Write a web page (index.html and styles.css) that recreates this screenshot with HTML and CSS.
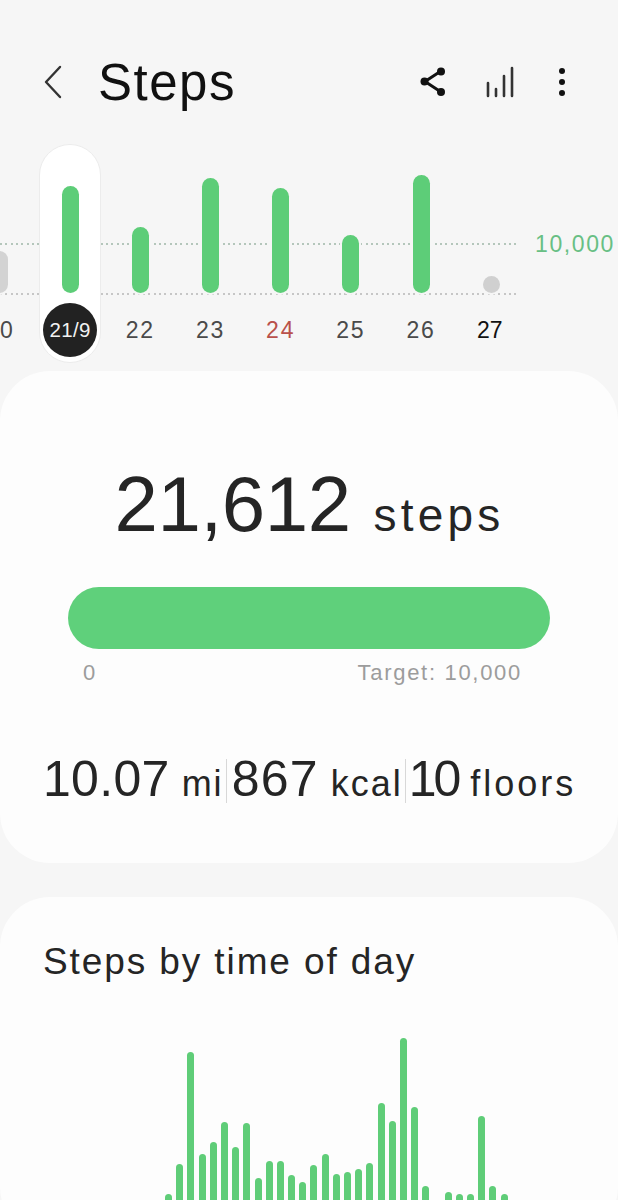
FILE: index.html
```html
<!DOCTYPE html>
<html lang="en">
<head>
<meta charset="utf-8">
<title>Steps</title>
<link rel="stylesheet" href="styles.css">
</head>
<body>
<div class="page">
  <header class="header">
    <svg class="back" width="22" height="34" viewBox="0 0 22 34"><path d="M19 2 L5 17 L19 32" fill="none" stroke="#333" stroke-width="2.4" stroke-linecap="round" stroke-linejoin="round"/></svg>
    <h1 class="title">Steps</h1>
    <div class="actions">
      <svg class="icon-share" width="30" height="32" viewBox="0 0 30 32"><path d="M22 5 L6 15.5 L22 26" fill="none" stroke="#111" stroke-width="3"/><circle cx="22" cy="5.500" r="4" fill="#111"/><circle cx="5.500" cy="15.500" r="4" fill="#111"/><circle cx="22" cy="26" r="4" fill="#111"/></svg>
      <svg class="icon-stats" width="30" height="32" viewBox="0 0 30 32"><path d="M2 30V17M10 30V23M18 30V10M26 30V2" fill="none" stroke="#333" stroke-width="2.600" stroke-linecap="round"/></svg>
      <svg class="icon-more" width="8" height="30" viewBox="0 0 8 30"><circle cx="4" cy="4" r="3" fill="#111"/><circle cx="4" cy="15" r="3" fill="#111"/><circle cx="4" cy="26" r="3" fill="#111"/></svg>
    </div>
  </header>

  <section class="trend">
    <div class="dots dots-target"></div>
    <div class="dots dots-base"></div>
    <span class="target-label">10,000</span>
    <div class="days">
      <div class="day"><div class="plot"><div class="bar bar-empty" style="height:42px"></div></div><div class="label">20</div></div>
      <div class="day day-selected"><div class="plot"><div class="bar" style="height:107px"></div></div><div class="label label-selected">21/9</div></div>
      <div class="day"><div class="plot"><div class="bar" style="height:66px"></div></div><div class="label">22</div></div>
      <div class="day"><div class="plot"><div class="bar" style="height:115px"></div></div><div class="label">23</div></div>
      <div class="day"><div class="plot"><div class="bar" style="height:105px"></div></div><div class="label label-sunday">24</div></div>
      <div class="day"><div class="plot"><div class="bar" style="height:58px"></div></div><div class="label">25</div></div>
      <div class="day"><div class="plot"><div class="bar" style="height:118px"></div></div><div class="label">26</div></div>
      <div class="day"><div class="plot"><div class="bar bar-dot" style="height:17px"></div></div><div class="label label-today">27</div></div>
    </div>
  </section>

  <section class="card card-summary">
    <div class="total"><span class="total-num">21,612</span><span class="total-unit">steps</span></div>
    <div class="progress"></div>
    <div class="progress-scale"><span>0</span><span>Target: 10,000</span></div>
    <div class="stats">
      <div class="stat"><span class="stat-num">10.07</span><span class="stat-unit">mi</span></div>
      <div class="stat stat-split"><span class="stat-num stat-num-wide">867</span><span class="stat-unit">kcal</span></div>
      <div class="stat stat-split stat-last"><span class="stat-num stat-num-tight">10</span><span class="stat-unit stat-unit-wide">floors</span></div>
    </div>
  </section>

  <section class="card card-time">
    <h2 class="card-title">Steps by time of day</h2>
    <div class="hours">
      <i style="height:26px"></i><i style="height:56px"></i><i style="height:168px"></i><i style="height:66px"></i><i style="height:78px"></i><i style="height:98px"></i><i style="height:73px"></i><i style="height:97px"></i><i style="height:42px"></i><i style="height:59px"></i><i style="height:59px"></i><i style="height:45px"></i><i style="height:38px"></i><i style="height:55px"></i><i style="height:66px"></i><i style="height:46px"></i><i style="height:48px"></i><i style="height:51px"></i><i style="height:57px"></i><i style="height:117px"></i><i style="height:99px"></i><i style="height:182px"></i><i style="height:113px"></i><i style="height:34px"></i><i style="height:0"></i><i style="height:28px"></i><i style="height:26px"></i><i style="height:26px"></i><i style="height:104px"></i><i style="height:34px"></i><i style="height:26px"></i>
    </div>
  </section>
</div>
</body>
</html>
```

FILE: styles.css
```css
* { box-sizing: border-box; }
html, body { margin: 0; padding: 0; }
body { background: #f6f6f6; font-family: "Liberation Sans", Arial, sans-serif; color: #252525; }
.page { width: 618px; height: 1200px; overflow: hidden; }

.header { display: flex; align-items: center; height: 144px; padding: 20px 0 0 41px; }
.back { flex: none; }
.title { margin: 0 0 0 35px; font-size: 51px; font-weight: 400; letter-spacing: 1.500px; color: #111; }
.actions { display: flex; align-items: center; margin-left: auto; padding-right: 52px; gap: 25px; }
.icon-share { margin-right: 12px; }
.icon-stats { margin-right: 17px; }

.trend { position: relative; height: 227px; overflow: hidden; }
.dots { position: absolute; left: 0; width: 517px; height: 1.500px; background: repeating-linear-gradient(90deg, #b4c6bb 0 2px, transparent 2px 5.300px); }
.dots-target { top: 99px; }
.dots-base { top: 149px; background: repeating-linear-gradient(90deg, #c6c6c6 0 2px, transparent 2px 5.300px); }
.target-label { position: absolute; left: 535px; top: 87px; font-size: 23px; line-height: 26px; letter-spacing: 1.600px; color: #68bf84; }

.days { position: relative; display: flex; margin-left: -35.200px; }
.day { display: flex; flex-direction: column; align-items: center; flex: none; width: 70.200px; height: 219px; }
.day-selected { width: 62px; margin: 0 4.100px; background: #fff; border: 1px solid #ececec; border-radius: 31px; margin-top: 0; }
.plot { display: flex; align-items: flex-end; height: 149px; flex: none; }
.day-selected .plot { height: 148px; }
.bar { width: 17px; border-radius: 9px; background: #5dcd78; box-shadow: 0 0 0 2px #f6f6f6; }
.day-selected .bar { box-shadow: none; }
.bar-empty { background: #d3d3d3; }
.bar-dot { background: #d0d0d0; }
.label { display: flex; align-items: center; justify-content: center; height: 54px; margin-top: 10px; font-size: 23px; letter-spacing: 1.800px; color: #4a4a4a; }
.label-selected { width: 54px; border-radius: 50%; background: #222; color: #f2f2f2; font-size: 20.500px; letter-spacing: 0.300px; }
.label-sunday { color: #b9514b; }
.label-today { color: #111; letter-spacing: 0; padding-right: 3px; }

.card { background: #fdfdfd; border-radius: 50px; }
.card-summary { height: 492px; padding: 88px 68px 0; }
.total { display: flex; align-items: baseline; justify-content: center; gap: 23px; height: 90px; padding-left: 1px; }
.total-num { font-size: 78px; line-height: 90px; letter-spacing: -0.400px; }
.total-unit { font-size: 46px; letter-spacing: 4.200px; }
.progress { height: 62px; margin-top: 38px; border-radius: 31px; background: #5fd07b; }
.progress-scale { display: flex; justify-content: space-between; padding: 12px 28px 0 15px; font-size: 22px; line-height: 24px; letter-spacing: 1.700px; color: #9c9c9c; }
.stats { display: flex; margin: 74px -25px 0; height: 44px; }
.stat { display: flex; align-items: baseline; gap: 12px; height: 44px; white-space: nowrap; }
.stat-split { border-left: 1px solid #d8d8d8; padding-left: 5px; margin-left: 2px; }
.stat-last { padding-left: 3px; }
.stat-num { font-size: 50px; line-height: 40px; letter-spacing: 0.300px; }
.stat-num-wide { letter-spacing: 1.200px; }
.stat-num-tight { letter-spacing: -3px; }
.stat-unit { font-size: 36px; letter-spacing: 2px; }
.stat-unit-wide { letter-spacing: 3px; }

.card-time { height: 340px; margin-top: 34px; padding: 43px 0 0 43px; }
.card-title { margin: 0; font-size: 37px; line-height: 44px; font-weight: 400; letter-spacing: 1.900px; }
.hours { display: flex; align-items: flex-end; gap: 4.200px; height: 190px; margin: 46px 0 0 122px; }
.hours i { display: block; flex: none; width: 7px; border-radius: 4px 4px 0 0; background: #5fcd78; }
```
